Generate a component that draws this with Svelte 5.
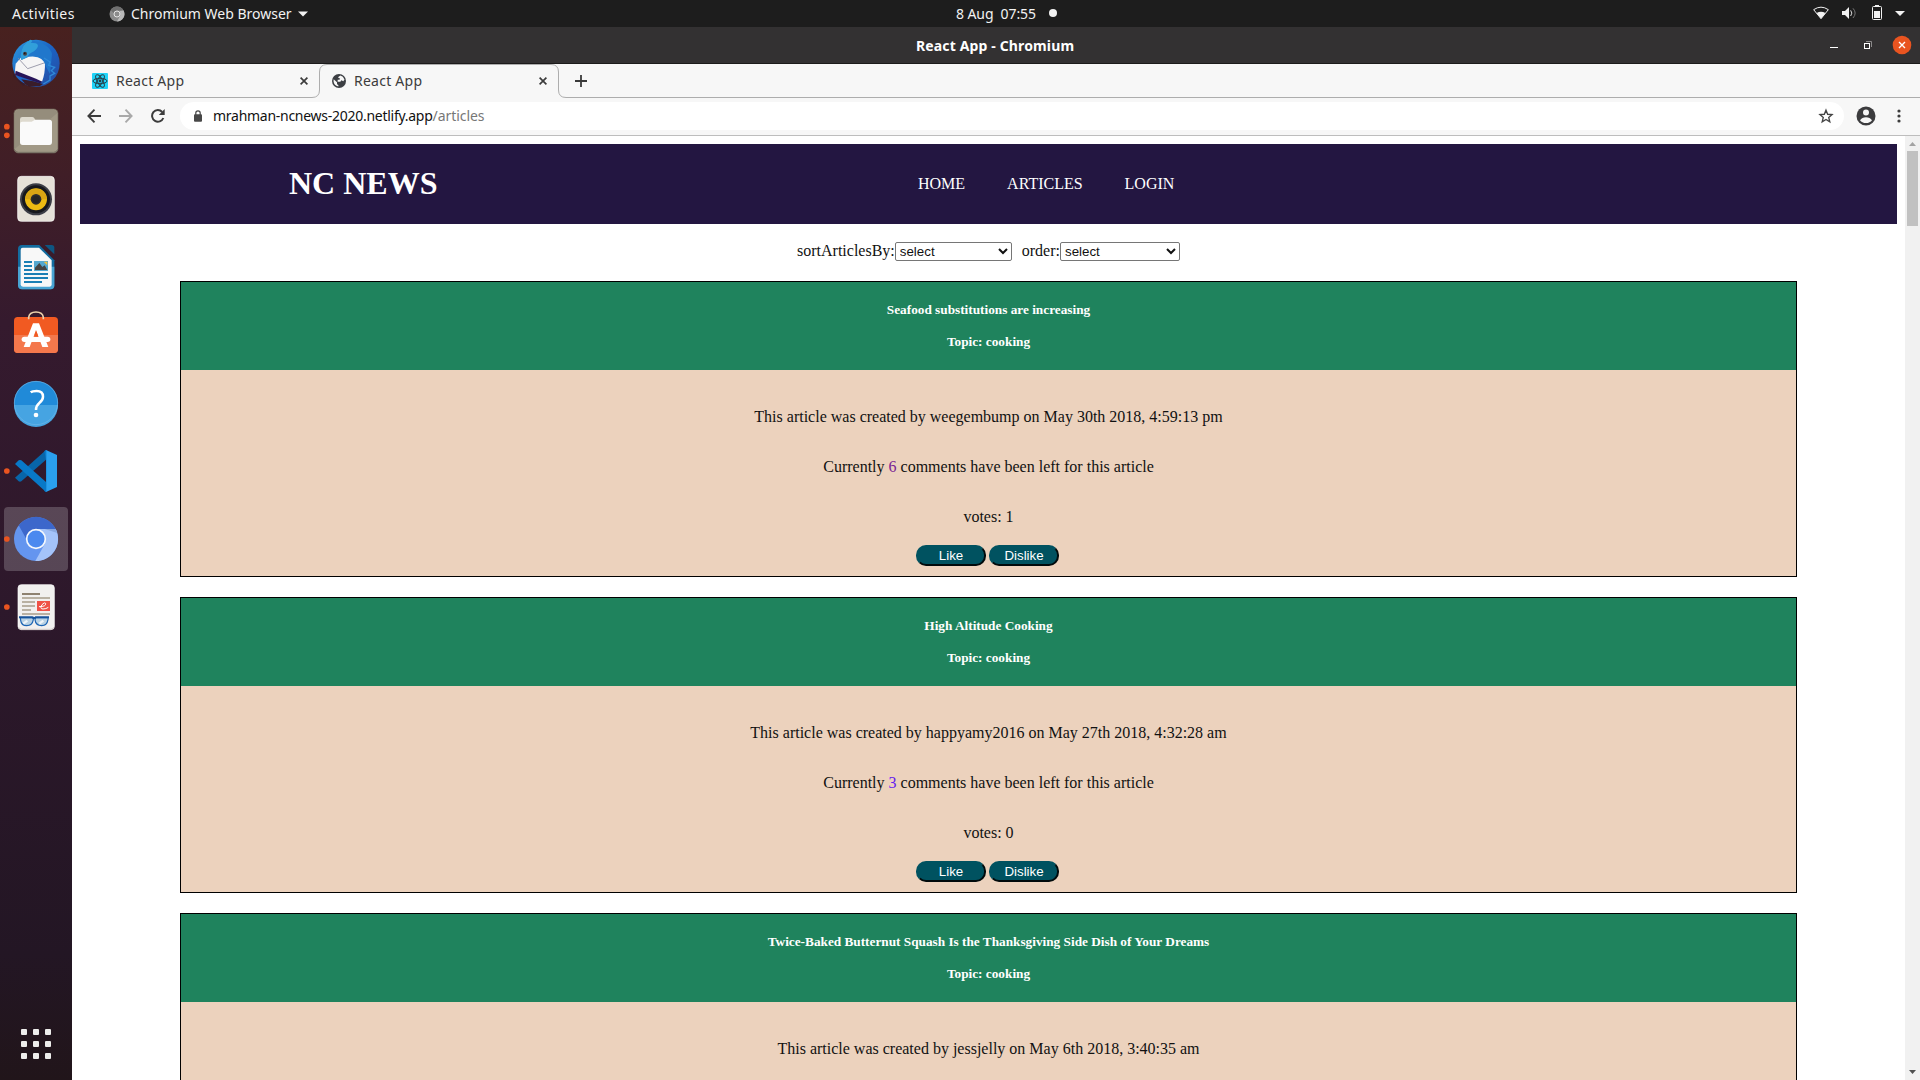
<script>
  const articles = [
    { title: 'Seafood substitutions are increasing', topic: 'cooking', author: 'weegembump', date: 'May 30th 2018, 4:59:13 pm', stats: { comments: 6, votes: 1 } },
    { title: 'High Altitude Cooking', topic: 'cooking', author: 'happyamy2016', date: 'May 27th 2018, 4:32:28 am', stats: { comments: 3, votes: 0 }, active: true },
    { title: 'Twice-Baked Butternut Squash Is the Thanksgiving Side Dish of Your Dreams', topic: 'cooking', author: 'jessjelly', date: 'May 6th 2018, 3:40:35 am' }
  ];
</script>

<div class="desktop">
  <header class="topbar">
    <span class="activities">Activities</span>
    <svg class="appicon" width="16" height="16" viewBox="0 0 16 16">
      <circle cx="8" cy="8" r="7.5" fill="#8b8b8b" />
      <path d="M8 .5A7.5 7.5 0 0 1 14.6 4.5H8A3.6 3.6 0 0 0 4.6 7L1.6 4A7.5 7.5 0 0 1 8 .5z" fill="#6f6f6f" />
      <path d="M14.6 4.5A7.5 7.5 0 0 1 8 15.5L11.2 9.8 11 5z" fill="#b9b9b9" />
      <circle cx="8" cy="8" r="3" fill="#8b8b8b" stroke="#e4e4e4" />
    </svg>
    <span class="appname">Chromium Web Browser</span>
    <svg class="caret" width="10" height="6" viewBox="0 0 10 6"><path d="M0 .4h10L5 5.6z" fill="#f2f2f2" /></svg>
    <div class="clock"><span>8 Aug&nbsp; 07:55</span><i></i></div>
    <svg class="tray" width="100" height="27" viewBox="270 0 300 81">
      <path d="M281 29Q303 14 325 29L303 56Z" fill="none" stroke="#f2f2f2" stroke-width="3" />
      <path d="M290 39Q303 32 316 39L303 56Z" fill="#f2f2f2" />
      <path d="M366 33h9l12-12v36l-12-12h-9z" fill="#f2f2f2" />
      <path d="M392 31q7 8 0 17" fill="none" stroke="#ddd" stroke-width="3" />
      <path d="M399 25q13 14 0 29" fill="none" stroke="#777" stroke-width="3" />
      <path d="M465 15h12v4h-12z" fill="#f2f2f2" />
      <rect x="457.500" y="19.500" width="27" height="39" rx="3" fill="none" stroke="#f2f2f2" stroke-width="3" />
      <path d="M462 33h18v21h-18z" fill="#f2f2f2" />
      <path d="M525 33h30l-15 15z" fill="#f2f2f2" />
    </svg>
  </header>

  <div class="below">
    <nav class="dock">
      <svg viewBox="12 3 192 192">
        <defs>
          <linearGradient id="bird" x1="0" y1="0" x2="1" y2="1"><stop offset="0" stop-color="#2d9be0" /><stop offset=".5" stop-color="#1b63c4" /><stop offset="1" stop-color="#28489c" /></linearGradient>
        </defs>
        <circle cx="108" cy="100" r="71" fill="url(#bird)" />
        <path d="M36 110Q40 146 72 168L74 160 64 148 100 154 128 162 120 168 88 170 40 140z" fill="#391c29" />
        <path d="M47 101Q44 128 45 134L126 155Q136 130 135 96L112 76 67 78z" fill="#f6f5f5" />
        <path d="M54 84L83 116 135 98" fill="none" stroke="#8b8c9e" stroke-width="2.500" />
        <path d="M47 122L108 146 127 155 120 160 45 135z" fill="#281559" />
        <path d="M62 76Q66 40 92 29L98 32Q148 40 156 72L150 132 138 110Q130 74 86 80L64 90z" fill="#2077cc" />
        <path d="M62 76Q66 40 92 29L98 32 92 38Q130 38 102 64 86 70 82 82L64 90z" fill="#319fda" />
        <path d="M132 84L150 96 146 106 164 112 154 122 164 130 150 138 150 150 130 162" fill="none" stroke="#2f8ad8" stroke-width="4" />
        <circle cx="75" cy="71" r="6" fill="#4a403f" /><circle cx="74" cy="70" r="2.500" fill="#11151c" />
      </svg>
      <svg viewBox="12 207 192 192">
        <circle cx="20.500" cy="290" r="8.500" fill="#e95420" /><circle cx="20.500" cy="316" r="8.500" fill="#e95420" />
        <rect x="42" y="237" width="132" height="132" rx="13" fill="#a19986" stroke="#6b6254" stroke-width="2" />
        <path d="M55 240h106q10 0 10 10L45 356V250q0-10 10-10" fill="#958d7c" />
        <path d="M43 358q4 9 12 9h106q9 0 12-9" fill="none" stroke="#777064" stroke-width="3" />
        <path d="M60 268q0-7 7-7h30q5 0 7 5l4 8h41v12H60z" fill="#dedacf" />
        <path d="M60 282q0-7 7-7h28l10-6h43q8 0 8 8v59q0 9-8 9H68q-8 0-8-8z" fill="#fafafa" />
      </svg>
      <svg viewBox="12 411 192 192">
        <rect x="53" y="439" width="110" height="135" rx="11" fill="#e6e1d8" stroke="#fff" stroke-width="2" />
        <circle cx="108" cy="508" r="48" fill="#3c3d45" /><circle cx="108" cy="508" r="42" fill="#17181d" />
        <circle cx="108" cy="508" r="33" fill="#edbb12" /><path d="M76 508a32 32 0 0 1 64 0z" fill="#d9a514" />
        <circle cx="108" cy="508" r="16" fill="#2d2d2d" /><circle cx="108" cy="508" r="11" fill="#252525" />
      </svg>
      <svg viewBox="12 615 192 192">
        <path d="M66 645h52l45 46v75q0 12-11 12H66q-12 0-12-12V657q0-12 12-12z" fill="#136c9f" />
        <path d="M54 710h109v56q0 12-11 12H66q-12 0-12-12z" fill="#48a4d3" />
        <path d="M68 653h49l38 38v72q0 7-6 7H69q-7 0-7-7V660q0-7 6-7z" fill="#f8f8f8" />
        <path d="M134 645h21q8 0 8 8v20z" fill="#0e5682" />
        <path d="M72 693h24v6H72zM72 705h24v6H72zM72 717h24v6H72zM72 729h72v6H72zM72 741h72v6H72zM72 753h54v6H72z" fill="#1a7fb5" />
        <rect x="102" y="693" width="42" height="30" fill="#54a8d0" /><path d="M105 720v-7l13-14 9 12 7-5 8 14z" fill="#454545" /><path d="M131 695h11v11z" fill="#f2c23c" />
      </svg>
      <svg viewBox="12 9 192 192">
        <rect x="42" y="51" width="132" height="108" rx="11" fill="#f15a22" /><path d="M42 105h132v43q0 11-11 11H53q-11 0-11-11z" fill="#f4784c" />
        <path d="M86 58V52q2-16 22-16t22 16v6" fill="none" stroke="#ecd2ac" stroke-width="5" />
        <path d="M99 70h18l28 71h-18l-19-51-19 51H71z" fill="#fff" /><rect x="65" y="110" width="86" height="16" rx="8" fill="#fff" />
        <path d="M109 94l6 16h-13z" fill="#f15a22" />
      </svg>
      <svg viewBox="12 213 192 192">
        <circle cx="108" cy="309" r="66" fill="#208ad8" /><path d="M42 315h132a66 66 0 0 1-132 0z" fill="#46a4e2" />
        <circle cx="108" cy="309" r="65" fill="none" stroke="#70b7e7" stroke-width="2" />
        <path d="M92 277q5-4 18-4 19 0 19 17 0 10-11 19-10 8-10 21" fill="none" stroke="#fff" stroke-width="7.500" /><circle cx="108" cy="345" r="7" fill="#fff" />
      </svg>
      <svg viewBox="12 417 192 192">
        <circle cx="20.500" cy="513" r="8.500" fill="#e95420" />
        <path d="M45 533l11 11q4 2 8 0l74-65v-29z" fill="#0865a9" />
        <path d="M45 492l11-11q4-2 8 0l74 65v30z" fill="#0879c8" />
        <path d="M138 450l33 15v96l-33 15z" fill="#2aa0ee" />
        <path d="M138 450l-5 3 5 28v65l-5 27 5 3 1-2V452z" fill="#0879c8" />
      </svg>
      <svg viewBox="12 621 192 192" class="current">
        <circle cx="20.500" cy="717" r="8.500" fill="#e95420" />
        <circle cx="108" cy="717" r="66" fill="#6495ef" />
        <path d="M56 676A66 66 0 0 1 167 687H108Q84 690 79 717z" fill="#3c67cb" />
        <path d="M108 687h59A66 66 0 0 1 106 783L136 729z" fill="#a4c3f9" />
        <path d="M134 687h33l5 12z" fill="#8ba9df" />
        <circle cx="108" cy="717" r="28" fill="#4b89ef" stroke="#f5f8fc" stroke-width="5" />
      </svg>
      <svg viewBox="12 825 192 192">
        <circle cx="20.500" cy="921" r="8.500" fill="#e95420" />
        <rect x="54" y="854" width="109" height="135" rx="10" fill="#f1f0ef" stroke="#fff" stroke-width="2" /><path d="M56 982q3 6 9 6h87q6 0 9-6" fill="none" stroke="#cfc9c7" stroke-width="3" />
        <path d="M66 879h54v6H66z" fill="#8e8271" /><path d="M66 891h84v6H66zM66 903h39v6H66zM66 915h39v6H66zM66 927h27v6H66zM66 939h84v6H66z" fill="#b9b1a3" />
        <rect x="111" y="903" width="39" height="30" fill="#ef5247" /><path d="M117 920q22 0 20-10-3-5-11 4-8 13 3 13 9 0 16-5" fill="none" stroke="#fff" stroke-width="3" />
        <g stroke="#1c65b4" stroke-width="3.500" fill="#b9d2e4">
          <path d="M61 953h36q4 0 3 6-3 18-20 18-16 0-18-16z" />
          <path d="M107 953h36q2 0 1 6-3 18-19 18-18 0-20-18z" />
        </g>
        <path d="M57 952h40q6 4 10 0h40" fill="none" stroke="#17539a" stroke-width="6" />
        <path d="M70 971l12-9M118 971l12-9" stroke="#edf4f9" stroke-width="7" />
      </svg>
      <svg class="apps" viewBox="0 0 64 64">
        {#each [0, 1, 2] as row}
          {#each [0, 1, 2] as col}
            <rect x={17 + col * 12} y={17 + row * 12} width="6" height="6" rx="1" fill="#eeeeec" />
          {/each}
        {/each}
      </svg>
    </nav>

    <section class="window">
      <div class="titlebar">
        <b>React App - Chromium</b>
        <svg width="86" height="36" viewBox="321 81 258 108">
          <path d="M330 141h24v3h-24z" fill="#fff" />
          <path d="M438 124.500h16.500v16.500" fill="none" stroke="#8c8a8b" stroke-width="3" />
          <rect x="433.500" y="130.500" width="15" height="15" fill="none" stroke="#fff" stroke-width="3" />
          <circle cx="546" cy="135" r="28" fill="#e95420" /><path d="M537 126l18 18M555 126l-18 18" stroke="#fff" stroke-width="4" />
        </svg>
      </div>

      <div class="tabs">
        <svg class="outline" width="1848" height="34" viewBox="0 0 1848 34">
          <path d="M0 33.500H240Q247.500 33.500 247.500 26V8Q247.500.500 255 .500H479Q486.500.500 486.500 8V26Q486.500 33.500 494 33.500H1848" fill="none" stroke="#adadad" />
        </svg>
        <div class="tab">
          <svg width="16" height="16" viewBox="0 0 16 16"><rect width="16" height="16" rx="1" fill="#1fd3f8" />
            <g fill="none" stroke="#253e48" stroke-width="1"><ellipse cx="8" cy="8" rx="7" ry="2.700" /><ellipse cx="8" cy="8" rx="7" ry="2.700" transform="rotate(60 8 8)" /><ellipse cx="8" cy="8" rx="7" ry="2.700" transform="rotate(120 8 8)" /></g><circle cx="8" cy="8" r="1.400" fill="#253e48" /></svg>
          <span>React App</span>
          <svg class="x" width="8" height="8" viewBox="0 0 8 8"><path d="M.600.600l6.800 6.800M7.400.600L.600 7.400" stroke="#3c3c3c" stroke-width="1.700" /></svg>
        </div>
        <div class="tab second">
          <svg width="16" height="16" viewBox="0 0 24 24"><circle cx="12" cy="12" r="10.500" fill="#3c3f43" /><path d="M4 9.500L9 14v2q0 1.500 2 2v2.200Q4.500 19 3.800 12.500zM11 6l3-2.200q4.500 1 6.200 6l-1.700 2.700-3-1.500-1.500 2h-4v-3h3V7.500h-2z" fill="#f7f7f7" /></svg>
          <span>React App</span>
          <svg class="x" width="8" height="8" viewBox="0 0 8 8"><path d="M.600.600l6.800 6.800M7.400.600L.600 7.400" stroke="#3c3c3c" stroke-width="1.700" /></svg>
        </div>
        <svg class="plus" width="12" height="12" viewBox="0 0 12 12"><path d="M6 0v12M0 6h12" stroke="#3a3a3a" stroke-width="1.800" /></svg>
      </div>

      <div class="toolbar">
        <svg class="nav" width="14" height="14" viewBox="0 0 14 14"><path d="M7.500.700L1.400 7l6.100 6.300M1.400 7H14" fill="none" stroke="#3c3c3c" stroke-width="1.900" /></svg>
        <svg class="nav" width="14" height="14" viewBox="0 0 14 14"><path d="M6.500.700L12.600 7l-6.100 6.300M12.600 7H0" fill="none" stroke="#a9a9a9" stroke-width="1.900" /></svg>
        <svg class="nav reload" width="14" height="14" viewBox="0 0 14 14"><path d="M12.300 9A5.800 5.800 0 1 1 11.200 3" fill="none" stroke="#3c3c3c" stroke-width="2" /><path d="M13.700 0v6H7.800z" fill="#3c3c3c" /></svg>
        <div class="omnibox">
          <svg width="10" height="12" viewBox="0 0 10 12"><path d="M2 4.300H8q1 0 1 1v5.500q0 1-1 1h-6q-1 0-1-1V5.300q0-1 1-1z" fill="#484848" /><path d="M2.800 5V3a2.200 2.200 0 0 1 4.400 0v2" fill="none" stroke="#484848" stroke-width="1.200" /></svg>
          <span class="url"><span class="host">mrahman-ncnews-2020.netlify.app</span><span class="path">/articles</span></span>
          <svg class="star" width="16" height="16" viewBox="0 0 24 24"><path d="M12 3.200l2.500 6.200 6.600.5-5 4.300 1.600 6.500L12 17.200l-5.700 3.500 1.600-6.500-5-4.300 6.600-.5z" fill="none" stroke="#444" stroke-width="2" /></svg>
        </div>
        <svg class="avatar" width="20" height="20" viewBox="0 0 20 20"><circle cx="10" cy="10" r="9.500" fill="#3c3c3e" /><circle cx="10" cy="6.500" r="3" fill="#f7f7f7" /><path d="M4 14.200q2-3 6-3t6 3q-2 2.800-6 2.800t-6-2.800z" fill="#f7f7f7" /></svg>
        <svg class="dots" width="4" height="14" viewBox="0 0 4 14"><circle cx="2" cy="2" r="1.600" fill="#3c3c3c" /><circle cx="2" cy="7" r="1.600" fill="#3c3c3c" /><circle cx="2" cy="12" r="1.600" fill="#3c3c3c" /></svg>
      </div>

      <div class="viewport">
        <main class="page">
          <header class="site">
            <h1>NC NEWS</h1>
            <nav><a href="#home">HOME</a><a href="#articles">ARTICLES</a><a href="#login">LOGIN</a></nav>
          </header>
          <form class="filters">
            <label>sortArticlesBy:<select class="sort"><option>select</option></select></label>
            <label>order:<select class="order"><option>select</option></select></label>
          </form>
          {#each articles as article}
            <article>
              <div class="heading">
                <h5>{article.title}</h5>
                <h5>Topic: {article.topic}</h5>
              </div>
              <div class="body">
                <p>This article was created by {article.author} on {article.date}</p>
                {#if article.stats}
                  <p>Currently <a class="count" class:active={article.active} href="#comments">{article.stats.comments}</a> comments have been left for this article</p>
                  <p>votes: {article.stats.votes}</p>
                  <div class="actions"><button>Like</button><button>Dislike</button></div>
                {/if}
              </div>
            </article>
          {/each}
        </main>
        <div class="scrollbar">
          <svg width="15" height="15" viewBox="0 0 15 15"><path d="M4 10h7L7.500 6z" fill="#a3a3a3" /></svg>
          <div class="thumb"></div>
          <svg class="down" width="15" height="15" viewBox="0 0 15 15"><path d="M4 5h7L7.500 9z" fill="#505050" /></svg>
        </div>
      </div>
    </section>
  </div>
</div>

<style>
  :global(body) { margin: 0; overflow: hidden; }
  svg { display: block; flex: none; }
  .desktop { width: 1920px; height: 1080px; overflow: hidden; display: flex; flex-direction: column; font-family: 'Noto Sans', sans-serif; font-size: 14px; }
  .topbar { height: 27px; flex: none; background: #1d1d1d; color: #f2f2f2; display: flex; align-items: center; position: relative; white-space: nowrap; }
  .activities { margin-left: 12px; width: 97px; letter-spacing: .45px; }
  .appname { margin-left: 6px; width: 160px; }
  .caret { margin-left: 7px; }
  .clock { position: absolute; left: 956px; top: 0; height: 26px; display: flex; align-items: center; letter-spacing: -.08px; }
  .clock span { width: 93px; }
  .clock i { width: 8px; height: 8px; border-radius: 50%; background: #f2f2f2; }
  .tray { margin-left: auto; margin-right: 10px; }
  .below { flex: 1; display: flex; min-height: 0; }
  .dock { width: 72px; box-sizing: border-box; flex: none; padding: 4px; display: flex; flex-direction: column; gap: 4px; background: linear-gradient(#48211f 0, #401e27 14%, #351a2e 28%, #2d182b 55%, #231624 88%, #21151a 100%); }
  .dock svg { width: 64px; height: 64px; }
  .dock .current { background: rgba(255, 255, 255, .2); border-radius: 4px; }
  .dock .apps { margin-top: auto; }
  .window { flex: 1; min-width: 0; display: flex; flex-direction: column; background: #f7f7f7; }
  .titlebar { height: 36px; flex: none; background: #333132; border-bottom: 1px solid #1c1b1b; color: #fff; display: flex; align-items: center; white-space: nowrap; }
  .titlebar b { margin-left: 844px; letter-spacing: .14px; }
  .titlebar svg { margin-left: auto; margin-right: 7px; }
  .tabs { position: relative; height: 34px; flex: none; display: flex; align-items: center; color: #3c3c3c; }
  .outline { position: absolute; inset: 0; }
  .tab { display: flex; align-items: center; width: 216px; margin-left: 20px; }
  .tab span { margin-left: 8px; padding-bottom: 2px; letter-spacing: .25px; }
  .tab .x { margin-left: auto; }
  .tab.second { margin-left: 23px; }
  .tab.second span { margin-left: 7px; }
  .plus { margin-left: 28px; }
  .toolbar { height: 36px; flex: none; padding: 0 0 1px 15px; border-bottom: 1px solid #bdbdbd; display: flex; align-items: center; }
  .nav { margin-right: 18px; }
  .reload { margin-right: 15px; }
  .omnibox { width: 1664px; height: 28px; box-sizing: border-box; background: #fff; border-radius: 14px; display: flex; align-items: center; padding-left: 13px; }
  .url { margin-left: 10px; padding-bottom: 1px; white-space: nowrap; display: flex; }
  .host { color: #111; letter-spacing: -.27px; }
  .path { color: #777; letter-spacing: -.05px; }
  .star { margin-left: auto; margin-right: 10px; }
  .avatar { margin-left: 12px; }
  .dots { margin-left: 21px; }
  .viewport { flex: 1; min-height: 0; display: flex; background: #fff; overflow: hidden; }
  .page { flex: 1; padding: 8px; font: 16px/18px 'Liberation Serif', serif; color: #111; }
  .site { height: 80px; background: #231641; color: #fff; display: flex; align-items: center; }
  .site h1 { margin: 0 0 2px 209px; width: 629px; font-size: 32px; line-height: 36px; }
  .site nav { display: flex; gap: 42px; }
  .site a { color: #fff; text-decoration: none; }
  .filters { display: flex; justify-content: center; gap: 10px; height: 57px; box-sizing: border-box; padding-top: 18px; }
  label { display: flex; height: 19px; align-items: flex-start; }
  select { height: 19px; margin: 0; font: 13.333px 'Liberation Sans', sans-serif; color: #111; background: #fff; border: 1px solid #767676; border-radius: 2px; padding: 0; }
  .sort { width: 117px; }
  .order { width: 120px; }
  article { margin: 0 100px 20px; border: 1px solid #000; height: 294px; background: #ecd2bd; text-align: center; }
  .heading { background: #1f835d; height: 88px; box-sizing: border-box; padding-top: 20px; display: flex; flex-direction: column; gap: 17px; color: #fff; }
  h5 { margin: 0; font-size: 13.28px; line-height: 15px; }
  .body { padding-top: 38px; }
  p { margin: 0 0 32px; }
  p:nth-of-type(3) { margin-bottom: 19px; }
  .count { color: #7a1c94; text-decoration: none; }
  .count.active { color: #6420ee; }
  .actions { display: flex; justify-content: center; gap: 3px; padding-right: 2px; }
  button { width: 70px; height: 21px; margin: 0; padding: 0; font: 13.333px 'Liberation Sans', sans-serif; color: #fff; background: #005260; border: 2px outset #005260; border-radius: 10px; }
  .scrollbar { width: 15px; flex: none; background: #f1f1f1; display: flex; flex-direction: column; }
  .thumb { width: 11px; height: 75px; margin-left: 2px; background: #c1c1c1; }
  .down { margin-top: auto; }
</style>
